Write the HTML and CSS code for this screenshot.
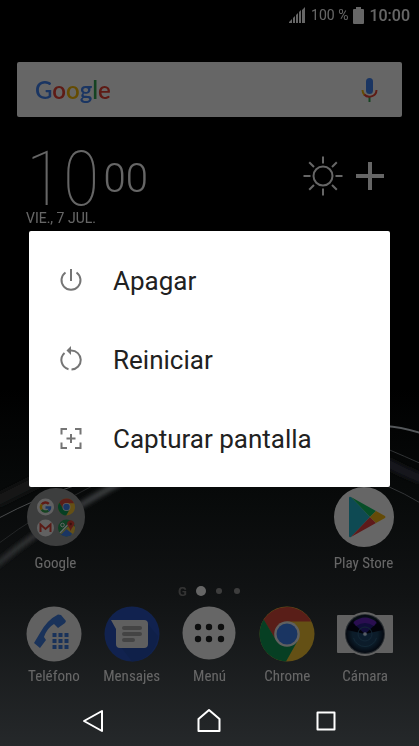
FILE: index.html
```html
<!DOCTYPE html>
<html lang="es">
<head>
<meta charset="utf-8">
<meta name="viewport" content="width=device-width, initial-scale=1">
<title>Menú de apagado</title>
<link rel="stylesheet" href="styles.css">
</head>
<body>
<svg class="wallpaper" viewBox="0 0 419 746" preserveAspectRatio="none" aria-hidden="true">
  <defs>
    <filter id="soft" x="-20%" y="-20%" width="140%" height="140%"><feGaussianBlur stdDeviation="2"/></filter>
    <linearGradient id="beam" gradientUnits="userSpaceOnUse" x1="0" y1="565" x2="120" y2="485">
      <stop offset="0" stop-color="#2c2e2f"/><stop offset="1" stop-color="#3c3e40"/>
    </linearGradient>
  </defs>
  <g fill="none">
    <path d="M-5 502Q30 484 60 470" stroke="#131516" stroke-width="12" filter="url(#soft)"/>
    <path d="M-5 566Q50 520 125 480" stroke="url(#beam)" stroke-width="6" filter="url(#soft)"/>
    <path d="M-5 546Q40 512 100 482" stroke="#242627" stroke-width="1"/>
    <path d="M-5 520Q40 496 80 484" stroke="#4a4c4d" stroke-width="1"/>
    <path d="M385 426Q402 427 424 434" stroke="#55585b" stroke-width="2"/>
    <path d="M385 448Q404 456 424 465" stroke="#303234" stroke-width="1"/>
    <path d="M385 462Q404 472 424 480" stroke="#15171a" stroke-width="10" filter="url(#soft)"/>
    <path d="M385 485Q404 493 424 505" stroke="#333537" stroke-width="1"/>
  </g>
</svg>

<main class="home">
  <header class="status">
    <svg width="17" height="16" viewBox="0 0 17 16" fill="#fff" aria-hidden="true"><path d="M0 16v-1l3-3v4zM4 16v-5l2-2v7zM7 16V8l2-2v10zM10 16V5l2-2v13zM13 16V3l3-3v16z"/></svg>
    <span class="percent">100 %</span>
    <svg width="11" height="17" viewBox="0 0 11 17" fill="#fff" aria-hidden="true"><path d="M3 0h5v2h2q1 0 1 1v13q0 1-1 1H1q-1 0-1-1V3q0-1 1-1h2z"/></svg>
    <span class="time">10:00</span>
  </header>

  <div class="search">
    <a class="logo" href="#"><span class="blue">G</span><span class="red">o</span><span class="yellow">o</span><span class="blue">g</span><span class="green">l</span><span class="red">e</span></a>
    <button class="plain" type="button" aria-label="Búsqueda por voz">
      <svg width="18" height="24" viewBox="0 0 18 24" fill="none"><rect x="5" y="0" width="7" height="16" rx="3.500" fill="#4285f4"/><path d="M8.500 19v5" stroke="#34a853" stroke-width="2"/><path d="M1.500 12q0 3 2 5" stroke="#fbbc05" stroke-width="2"/><path d="M3.300 16.500c3 3.500 12 3 12.200-4.500" stroke="#ea4335" stroke-width="2"/></svg>
    </button>
  </div>

  <section class="widget">
    <div>
      <div class="clock"><span class="hours">10</span><span class="minutes">00</span></div>
      <div class="date">VIE., 7 JUL.</div>
    </div>
    <div class="weather">
      <svg width="40" height="40" viewBox="-20 -20 40 40" fill="none" stroke="#fff" stroke-width="2" aria-hidden="true"><circle r="9.500"/><path d="M0-19.500v7M0 12.500v7M-19.500 0h7M12.500 0h7M-13.800-13.800l4.800 4.800M13.800-13.800l-4.800 4.800M-13.800 13.800l4.800-4.800M13.800 13.800l-4.800-4.800"/></svg>
      <button class="plain" type="button" aria-label="Añadir"><svg width="28" height="28" viewBox="0 0 28 28" stroke="#fff" stroke-width="4"><path d="M14 0v28M0 14h28"/></svg></button>
    </div>
  </section>

  <nav class="apps shortcuts">
    <a class="app" href="#">
      <svg class="large" viewBox="-30 -30 60 60" aria-hidden="true">
        <defs>
          <g id="chrome">
            <circle r="27.500" fill="#fbc934"/>
            <path d="M-23.500-14A27.500 27.500 0 0 1 24.200-12.500H0L-11 6z" fill="#de4a3c"/>
            <path d="M-23.300-14.500A27.500 27.500 0 0 0-1 27.500L10 8-11 6z" fill="#109d58"/>
            <circle r="12.800" fill="#f1f1f1"/><circle r="10.500" fill="#4285f4"/>
          </g>
        </defs>
        <circle r="29" fill="#999b9c"/>
        <g transform="translate(-10.500 -10)"><circle r="8.500" fill="#f3f3f3"/><g fill="none" stroke-width="2.500"><path d="M-3.700-2.600A4.500 4.500 0 0 1 3.300-3.200" stroke="#ea4335"/><path d="M-3.700-2.600a4.500 4.500 0 0 0 0 5.200" stroke="#fbbc05"/><path d="M-3.700 2.600a4.500 4.500 0 0 0 6.600 1" stroke="#34a853"/><path d="M2.900 3.600Q4.500 2.500 4.500.5H0" stroke="#4285f4"/></g></g>
        <use href="#chrome" transform="translate(10.500 -10) scale(.31)"/>
        <g transform="translate(-10.500 11)"><circle r="8.500" fill="#f3f3f3"/><path d="M-5 4v-7.500L0 1l5-4.500V4" fill="none" stroke="#e0453a" stroke-width="2"/></g>
        <g transform="translate(10.500 11)"><circle r="8.500" fill="#28a05a"/><path d="M-6 6L5-5l3.500 4A8.500 8.500 0 0 1 5 7z" fill="#f4c542"/><path d="M-5.500 6.500L0 1l6 5A8.500 8.500 0 0 1-5.500 6.500z" fill="#4285f4"/><path d="M-6.500 5L4-6" stroke="#fff" stroke-width="1.500"/><circle cx="-4" cy="-3" r="1.800" fill="none" stroke="#fff"/><path d="M4 3Q3-.5 1.500-2A3.500 3.500 0 1 1 7-2Q5 0 4 3z" fill="#e0453a"/><circle cx="4.200" cy="-4" r="1.200" fill="#8c2720"/></g>
      </svg>
      <span>Google</span>
    </a>
    <a class="app last" href="#">
      <svg class="large" viewBox="-30 -30 60 60" aria-hidden="true">
        <circle r="30" fill="#fff"/>
        <path d="M-15-19q0-2 2-1L6 0l-19 20q-2 1-2-1z" fill="#22b8cf"/>
        <path d="M-13-20L12-6 6 0z" fill="#12c465"/><path d="M-13 20L12 6 6 0z" fill="#ec4040"/>
        <path d="M12-6l9 5q1 1 0 2l-9 5-6-6z" fill="#fbbc14"/>
      </svg>
      <span>Play Store</span>
    </a>
  </nav>

  <div class="pages" aria-hidden="true"><span class="page-g">G</span><i class="dot current"></i><i class="dot"></i><i class="dot"></i></div>

  <nav class="apps dock">
    <a class="app" href="#">
      <svg viewBox="-28 -28 56 56" aria-hidden="true">
        <circle r="27.500" fill="#f2f2f2"/>
        <g fill="#3f7de0"><path d="M-20 9L-14-1Q-7-14 4-19.500L7-19 12-13 11-11 4-6 0-10Q-7-6-10 3L-8 6-14 14z"/><path d="M-1.500-1h4v4h-4zM4.500-1h4v4h-4zM10.500-1h4v4h-4zM-1.500 5h4v4h-4zM4.500 5h4v4h-4zM10.500 5h4v4h-4zM-1.500 11h4v4h-4zM4.500 11h4v4h-4zM10.500 11h4v4h-4z"/></g>
      </svg>
      <span>Teléfono</span>
    </a>
    <a class="app" href="#">
      <svg viewBox="-28 -28 56 56" aria-hidden="true">
        <circle r="27.500" fill="#2a56c6"/><path d="M15-11L26 2A27.500 27.500 0 0 1 0 27.500L-12 12z" fill="#264fb6"/>
        <path d="M-21-14H12q4 0 4 4v20q0 4-4 4h-24q-4 0-4-4V-5z" fill="#eee"/>
        <path d="M-8-6H8M-8 0H8M-8 6h9" stroke="#a9a9a9" stroke-width="4" stroke-linecap="round"/>
      </svg>
      <span>Mensajes</span>
    </a>
    <a class="app" href="#">
      <svg viewBox="-28 -28 56 56" aria-hidden="true">
        <circle cy="-1" r="26.500" fill="#fff"/>
        <g fill="#202224"><circle cx="-11" cy="-7" r="3.200"/><circle cy="-7" r="3.200"/><circle cx="12" cy="-7" r="3.200"/><circle cx="-11" cy="5" r="3.200"/><circle cy="5" r="3.200"/><circle cx="12" cy="5" r="3.200"/></g>
      </svg>
      <span>Menú</span>
    </a>
    <a class="app" href="#">
      <svg viewBox="-28 -28 56 56" aria-hidden="true"><use href="#chrome"/></svg>
      <span>Chrome</span>
    </a>
    <a class="app" href="#">
      <svg viewBox="-28 -28 56 56" aria-hidden="true">
        <defs><radialGradient id="lens"><stop offset="0" stop-color="#6aa3d4"/><stop offset=".15" stop-color="#1c4670"/><stop offset=".65" stop-color="#1d4767"/><stop offset="1" stop-color="#0a1528"/></radialGradient></defs>
        <rect x="-28" y="-19" width="56" height="38" rx="1" fill="#f2f2f2"/>
        <circle r="22" fill="#f5f5f5"/><circle r="20" fill="#65717a"/><circle r="19" fill="url(#lens)"/>
        <path d="M0 0l-18-4A18.500 18.500 0 0 1-11-14zM0 0L18-4A18.500 18.500 0 0 0 11-14z" fill="#050818"/>
        <path d="M0 0l-12-11Q0-20 12-11z" fill="#2a2090"/>
        <path d="M-11.500-12Q0-21 11.500-12L9-8Q0-14-9-8z" fill="#6a22c8"/>
        <g fill="none" stroke="#2f6285"><circle r="7"/><path d="M-11.500 4a12 12 0 0 0 23 0"/></g><circle r="1.800" fill="#dcecff"/>
      </svg>
      <span>Cámara</span>
    </a>
  </nav>
</main>

<nav class="system">
  <button class="plain" type="button" aria-label="Atrás"><svg width="24" height="24" viewBox="0 0 24 24"><path d="M3 12L21 2v20z"/></svg></button>
  <button class="plain" type="button" aria-label="Inicio"><svg width="24" height="24" viewBox="0 0 24 24"><path d="M1.500 22V10L12 1l10.500 9v12z"/></svg></button>
  <button class="plain" type="button" aria-label="Recientes"><svg width="24" height="24" viewBox="0 0 24 24"><path d="M3.500 3.500h17v17h-17z"/></svg></button>
</nav>

<div class="overlay">
  <div class="dialog" role="dialog" aria-label="Opciones de apagado">
    <button class="option" type="button">
      <svg width="24" height="24" viewBox="0 0 24 24"><path d="M12 0v12M6.500 3.500a9.500 9.500 0 1 0 11 0"/></svg>
      Apagar
    </button>
    <button class="option" type="button">
      <svg width="24" height="24" viewBox="0 0 24 24"><path d="M12 2.500A9.500 9.500 0 0 1 12.500 21.500M9.500 21.200A9.500 9.500 0 0 1 5.500 5"/><path d="M7.500 2.500L12-2v9z" fill="#757575" stroke="none"/></svg>
      Reiniciar
    </button>
    <button class="option" type="button">
      <svg width="24" height="24" viewBox="0 0 24 24"><path d="M2.500 7.500V2H8M16 2h5.500v5.500M2.500 15.500V21H8M16 21h5.500v-5.500M12 7v9M7.500 11.500h9"/></svg>
      Capturar pantalla
    </button>
  </div>
</div>
</body>
</html>
```
FILE: styles.css
```css
* {
  box-sizing: border-box;
}

body {
  margin: 0;
  min-height: 100vh;
  position: relative;
  display: flex;
  flex-direction: column;
  overflow-x: hidden;
  background: linear-gradient(#000 0%, #000 52%, #070909 65%, #111314 80%, #25282a 100%);
  color: #fff;
  font-family: Roboto, "Liberation Sans", sans-serif;
}

svg {
  display: block;
  flex: none;
  overflow: visible;
}

a {
  color: inherit;
  text-decoration: none;
}

.plain {
  padding: 0;
  border: 0;
  background: none;
}

.wallpaper {
  position: absolute;
  inset: 0;
  width: 100%;
  height: 100%;
  overflow: hidden;
}

/* Everything behind the dialog is dimmed to 40% */
.home {
  flex: 1;
  display: flex;
  flex-direction: column;
  filter: brightness(0.4);
}

.status {
  height: 30px;
  padding: 0 9px;
  display: flex;
  align-items: center;
  justify-content: flex-end;
  gap: 5px;
}

.percent {
  font-size: 14px;
}

.time {
  font-size: 16px;
  font-weight: 500;
}

.search {
  height: 55px;
  margin: 32px 17px 0;
  padding: 0 23px 0 18px;
  display: flex;
  align-items: center;
  justify-content: space-between;
  border-radius: 2px;
  background: #fff;
}

.logo {
  font: 600 24px/32px Lato, sans-serif;
}

.blue { color: #4285f4; }
.red { color: #ea4335; }
.yellow { color: #fbbc05; }
.green { color: #34a853; }

.widget {
  margin-top: 24px;
  padding: 0 35px 0 26px;
  display: flex;
  justify-content: space-between;
}

.clock {
  height: 69px;
  display: flex;
  gap: 4px;
}

.hours {
  font-family: "Roboto Condensed", Roboto, sans-serif;
  font-size: 76px;
  line-height: 76px;
  font-weight: 100;
}

.minutes {
  font-size: 40px;
  line-height: 76px;
  font-weight: 300;
}

.date {
  font-size: 14px;
  line-height: 16px;
}

.weather {
  height: 70px;
  display: flex;
  align-items: center;
  gap: 13px;
}

.apps {
  padding: 0 15px;
  display: grid;
  grid-template-columns: repeat(5, 1fr);
}

.shortcuts {
  margin-top: auto;
  padding: 0 17px;
}

.app {
  display: flex;
  flex-direction: column;
  align-items: center;
  gap: 6px;
  font-family: "Roboto Condensed", Roboto, sans-serif;
  font-size: 15px;
  line-height: 20px;
  white-space: nowrap;
}

.app svg {
  width: 56px;
  height: 56px;
}

.app .large {
  width: 60px;
  height: 60px;
}

.last {
  grid-column: 5;
}

.pages {
  height: 20px;
  margin-top: 8px;
  display: grid;
  grid-template-columns: repeat(4, 18px);
  place-items: center;
  place-content: center;
}

.page-g {
  color: #808080;
  font-size: 13px;
  font-weight: 700;
}

.dot {
  width: 6px;
  height: 6px;
  border-radius: 50%;
  background: #999;
}

.current {
  width: 10px;
  height: 10px;
  background: #fff;
}

.dock {
  margin: 5px 0 9px;
}

.dock .app {
  gap: 4px;
}

.system {
  position: relative;
  height: 51px;
  padding: 0 35px;
  display: grid;
  grid-template-columns: repeat(3, 1fr);
  place-items: center;
}

.system svg {
  fill: none;
  stroke: #fff;
  stroke-width: 2;
  stroke-linejoin: round;
}

.overlay {
  position: absolute;
  inset: 24px 29px 52px;
  display: grid;
  align-items: center;
}

.dialog {
  padding: 10px 0 9px;
  display: flex;
  flex-direction: column;
  border-radius: 2px;
  background: #fff;
}

.option {
  height: 79px;
  padding: 0 30px;
  display: flex;
  align-items: center;
  gap: 30px;
  border: 0;
  background: none;
  color: #212121;
  font: 400 26px/32px Roboto, "Liberation Sans", sans-serif;
}

.option svg {
  fill: none;
  stroke: #757575;
  stroke-width: 2;
}
```
